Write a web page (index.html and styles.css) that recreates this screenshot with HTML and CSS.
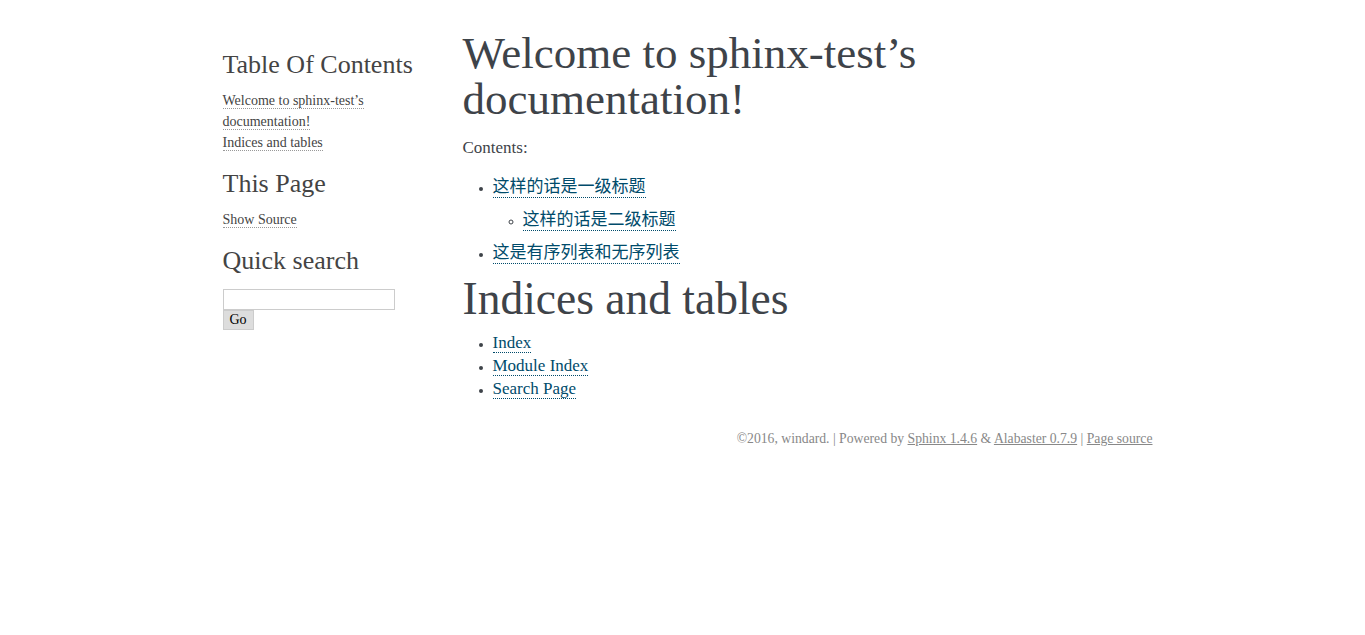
FILE: index.html
```html
<!DOCTYPE html>
<html lang="zh">
<head>
<meta charset="utf-8">
<title>Welcome to sphinx-test’s documentation! — sphinx-test 1.0 documentation</title>
<link rel="stylesheet" href="styles.css">
</head>
<body>
<div class="document">
  <div class="sphinxsidebar">
    <div class="sidebar-wrapper">
      <h3><a href="#">Table Of Contents</a></h3>
      <ul class="localtoc">
        <li><a href="#">Welcome to sphinx-test’s documentation!</a></li>
        <li><a href="#">Indices and tables</a></li>
      </ul>
      <div class="note">
        <h3>This Page</h3>
        <ul class="this-page-menu">
          <li><a href="#">Show Source</a></li>
        </ul>
      </div>
      <div class="searchbox">
        <h3>Quick search</h3>
        <form class="search">
          <input type="text" class="search-input" name="q">
          <input type="submit" class="search-go" value="Go">
        </form>
      </div>
    </div>
  </div>
  <div class="body">
    <h1 class="title">Welcome to sphinx-test’s documentation!</h1>
    <p class="caption">Contents:</p>
    <ul class="toctree">
      <li><a class="cjk" href="#">这样的话是一级标题</a>
        <ul class="sub">
          <li><a class="cjk" href="#">这样的话是二级标题</a></li>
        </ul>
      </li>
      <li><a class="cjk" href="#">这是有序列表和无序列表</a></li>
    </ul>
    <h1 class="section">Indices and tables</h1>
    <ul class="indices">
      <li><a href="#">Index</a></li>
      <li><a href="#">Module Index</a></li>
      <li><a href="#">Search Page</a></li>
    </ul>
  </div>
</div>
<div class="footer">
  ©2016, windard. | Powered by <a href="#">Sphinx 1.4.6</a> &amp; <a href="#">Alabaster 0.7.9</a> | <a href="#">Page source</a>
</div>
</body>
</html>
```

FILE: styles.css
```css
html, body {
  margin: 0;
  padding: 0;
}
body {
  font-family: "Liberation Serif", "Noto Sans CJK SC", serif;
  font-size: 17px;
  color: #000;
  background: #fff;
}
.document {
  width: 940px;
  margin: 30px auto 0 auto;
  display: flex;
  align-items: flex-start;
}
.sphinxsidebar {
  width: 220px;
  flex: none;
  font-size: 14px;
  line-height: 1.5;
}
.sidebar-wrapper {
  padding: 18px 10px;
}
.sphinxsidebar h3 {
  font-family: "Liberation Serif", serif;
  color: #444;
  font-size: 26px;
  font-weight: normal;
  line-height: 34px;
  margin: 0 0 8px 0;
  padding: 0;
}
.sphinxsidebar h3 a {
  border: none;
}
.sphinxsidebar a {
  color: #444;
  text-decoration: none;
  border-bottom: 1px dotted #999;
}
.sphinxsidebar ul {
  list-style: none;
  margin: 0 0 14px 0;
  padding: 0;
}
.sphinxsidebar li {
  line-height: 21px;
}
.search {
  margin: 0;
  padding-top: 3px;
}
.search-input {
  display: block;
  width: 172px;
  height: 21px;
  box-sizing: border-box;
  border: 1px solid #ccc;
  margin: 0;
  padding: 0 2px;
  font-family: "Liberation Serif", serif;
  font-size: 14px;
}
.search-go {
  display: block;
  width: 31px;
  height: 20px;
  box-sizing: border-box;
  border: 1px solid #ccc;
  background: #ddd;
  margin: 0;
  padding: 0;
  font-family: "Liberation Serif", serif;
  font-size: 14px;
  color: #000;
}
.body {
  flex: 1;
  color: #3e4349;
  padding: 0 30px;
}
.body h1 {
  font-family: "Liberation Serif", serif;
  font-weight: normal;
  font-size: 45px;
  line-height: 46px;
  padding: 0;
}
.body h1.title {
  margin: 0 0 14px 0;
}
.body h1.section {
  margin: 12px 0 0 0;
  font-size: 45.5px;
}
.body p {
  margin: 0;
  line-height: 23px;
}
.body ul {
  margin: 10px 0 10px 30px;
  padding: 0;
}
.body ul.toctree {
  margin-top: 16px;
}
.body ul.indices {
  margin-top: 9px;
}
.body li {
  line-height: 23px;
}
.body li::marker {
  font-size: 12px;
}
.body ul.sub {
  list-style: circle;
  margin: 10px 0 10px 30px;
}
.body a {
  color: #004b6b;
  text-decoration: none;
  border-bottom: 1px dotted #004b6b;
}
.cjk {
  font-family: "Noto Sans CJK SC", sans-serif;
  line-height: 1;
}
.footer {
  width: 940px;
  margin: 21px auto 30px auto;
  font-size: 13.7px;
  color: #888;
  text-align: right;
}
.footer a {
  color: #888;
  text-decoration: underline;
}
```
